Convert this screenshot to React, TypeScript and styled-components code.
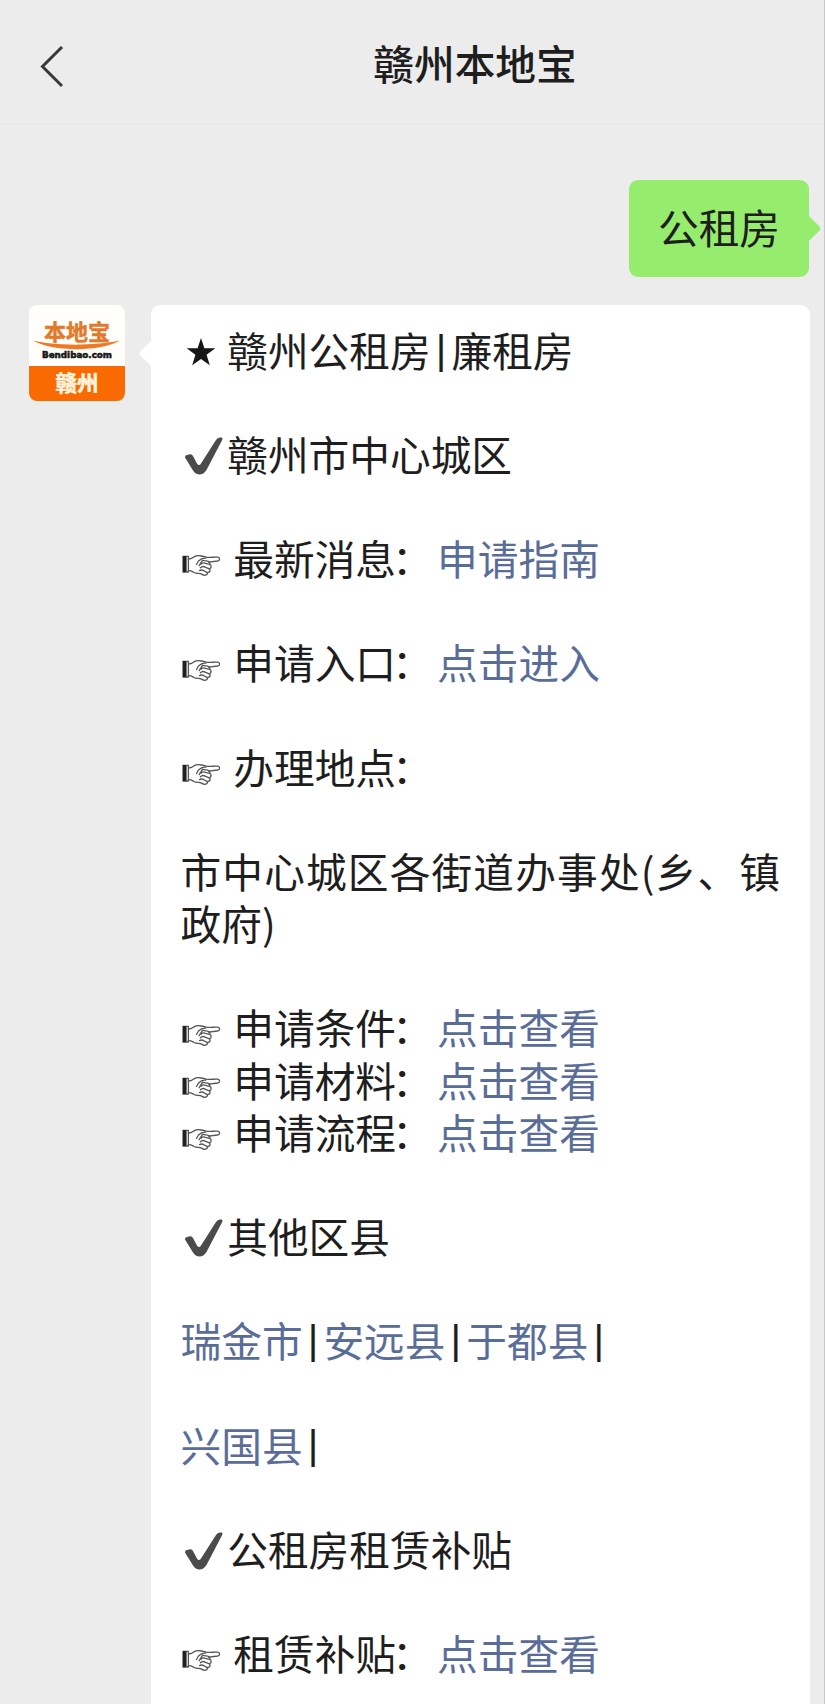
import React from "react";
import styled, { createGlobalStyle } from "styled-components";

const Global = createGlobalStyle`
  html, body { margin: 0; padding: 0; background: #ececec; }
  * { box-sizing: border-box; }
`;

const Screen = styled.div`
  width: 825px;
  height: 1704px;
  overflow: hidden;
  display: flex;
  flex-direction: column;
  background: #ececec;
  border-right: 1px solid #c6c7c9;
  font-family: "Noto Sans CJK SC", sans-serif;
  font-size: 40.7px;
  color: #1e1e1e;
`;

const Header = styled.header`
  flex: none;
  height: 125px;
  padding: 0 36px;
  display: grid;
  grid-template-columns: 40px 1fr 0;
  align-items: center;
  border-bottom: 2px solid #e9e9e9;
`;

const Title = styled.h1`
  margin: 2px 0 0 86px;
  text-align: center;
  font-size: 40.7px;
  line-height: 52px;
  font-weight: 500;
`;

const BackIcon = styled.svg`
  width: 30px;
  height: 46px;
  margin-top: 8px;
`;

const Chat = styled.main`
  flex: 1;
  display: flex;
  flex-direction: column;
  gap: 28px;
  padding: 55px 14px 0 29px;
`;

const Outgoing = styled.div`
  align-self: flex-end;
  position: relative;
  width: 180px;
  height: 97px;
  margin-right: 1px;
  padding-bottom: 4px;
  display: flex;
  align-items: center;
  justify-content: center;
  border-radius: 9px;
  background: #96ec6d;
  line-height: 52px;
`;

const Tail = styled.svg<{ $side: "left" | "right" }>`
  position: absolute;
  ${(p) => (p.$side === "right" ? "right: -12px" : "left: -12px")};
  top: 35px;
  width: 13px;
  height: 27px;
`;

const Incoming = styled.div`
  display: flex;
  gap: 26px;
  align-items: flex-start;
`;

const Avatar = styled.div`
  width: 96px;
  height: 96px;
  flex: none;
  border-radius: 8px;
  overflow: hidden;
  background: #fffefb;
`;

const Bubble = styled.article`
  position: relative;
  width: 660px;
  height: 1420px;
  padding: 18.6px 0 0 29.5px;
  border-radius: 9px;
  background: #fff;
`;

const Line = styled.p<{ $space?: number }>`
  margin: 0;
  height: 52.15px;
  display: flex;
  align-items: center;
  white-space: nowrap;
  line-height: 52.15px;
  letter-spacing: ${(p) => p.$space ?? 0}px;
`;

const Gap = styled.div`
  height: 52.15px;
`;

const Link = styled.a`
  color: #5a6d99;
`;

const Colon = styled.span`
  width: 45px;
  margin-left: -4px;
`;

const BarSlot = styled.span`
  width: 20.8px;
  text-align: center;
  font-family: "Liberation Sans", sans-serif;
`;

const Marker = styled.svg<{ $slot: number }>`
  width: ${(p) => p.$slot}px;
  height: 52px;
  flex: none;
  margin-top: 4px;
`;

const Bar = () => <BarSlot>|</BarSlot>;

const Star = () => (
  <Marker $slot={46.7} viewBox="0 0 46.7 52">
    <path
      d="M20 12 L23.4 22.2 L34.3 22.3 L25.6 28.8 L28.8 39.2 L20 33 L11.2 39.2 L14.4 28.8 L5.7 22.3 L16.6 22.2Z"
      fill="#161616"
    />
  </Marker>
);

const Check = () => (
  <Marker $slot={46.7} viewBox="0 0 46.7 52">
    <path
      d="M4 27.5Q3.8 25.5 6 25L9 24.2Q11.2 24 12 26L16 33.5Q18 36.5 20 33.5L35 10Q36.5 7.6 39 7.5H40.6Q42.2 7.8 41.2 10L25.5 40Q22.5 44.6 18.5 44.6Q14.5 44.4 12 40.5Z"
      fill="#4b4b4b"
    />
  </Marker>
);

const Hand = () => (
  <Marker $slot={52.8} viewBox="0 0 52.8 52" fill="none" stroke="#555" strokeWidth="1.3" strokeLinecap="round" strokeLinejoin="round">
    <path d="M1.5 21.8H5.6V38.6H1.5Z" fill="#202020" stroke="none" />
    <path d="M5.6 22.4H7.4V38H5.6" />
    <path d="M7.4 25C10 25.2 11.5 24.2 13.5 22.6C15.5 21.2 18 21.4 20.5 22L25.5 23.2C29.5 24 33 22.6 36.8 23.2C39.4 23.8 39 26.6 36.8 27L27.5 28.2" />
    <path d="M7.4 36.6C10 36.4 11 37.4 13 38.5C16 40 18.5 38.8 21 40.4C23.5 42 26.5 41.4 26.6 38.6C29.4 38.4 29.6 36 28.4 34.8C30.8 33.6 30.6 31.2 28.6 30.4C29.4 29 28.6 27.6 26.5 27.2L21.5 26.4" />
    <path d="M24.8 24.2C22.5 23.8 19.5 25 17.5 27L15.5 30.5M20.2 30.2C21.2 28.6 23 28.4 24.4 29.4L28.6 30.4M19.4 33.8C21.4 31.6 23 32.4 24.6 33.4L28.4 34.8M18.6 36.6C21 35 22.4 36.4 24 37.4L26.6 38.6M21.5 26.4L18.2 31.6" />
  </Marker>
);

const Logo = () => (
  <svg width="96" height="96" viewBox="0 0 96 96">
    <rect y="61" width="96" height="35" fill="#fa6a02" />
    <text x="48" y="34.5" textAnchor="middle" fontSize="22" fontWeight="700" fill="#e3792a" stroke="#e3792a" strokeWidth=".5" fontFamily="Noto Sans CJK SC" textLength="66">
      本地宝
    </text>
    <path d="M4 35.5C25 41 66 41 91 35.5C72 47 23 47 4 35.5Z" fill="#ee7a24" />
    <text x="48" y="52.5" textAnchor="middle" fontSize="9" fontWeight="700" fill="#181818" stroke="#181818" strokeWidth=".6" fontFamily="DejaVu Sans" textLength="70" lengthAdjust="spacingAndGlyphs">
      Bendibao.com
    </text>
    <text x="48" y="86" textAnchor="middle" fontSize="21.5" fontWeight="700" fill="#fff4df" stroke="#fff4df" strokeWidth=".6" fontFamily="Noto Sans CJK SC">
      赣州
    </text>
  </svg>
);

const Entry = ({ label, link }: { label: string; link?: string }) => (
  <Line>
    <Hand />
    {label}
    <Colon>：</Colon>
    {link && <Link>{link}</Link>}
  </Line>
);

export default function App() {
  return (
    <>
      <Global />
      <Screen lang="zh-CN">
        <Header>
          <BackIcon viewBox="0 0 30 46" fill="none" stroke="#3a3a3a" strokeWidth="3">
            <path d="M26 4L6.5 23.5L26 43" />
          </BackIcon>
          <Title>赣州本地宝</Title>
        </Header>
        <Chat>
          <Outgoing>
            公租房
            <Tail $side="right" viewBox="0 0 13 27">
              <path d="M0 0L11.5 11.5Q13 13.5 11.5 15.5L0 27Z" fill="#96ec6d" />
            </Tail>
          </Outgoing>
          <Incoming>
            <Avatar>
              <Logo />
            </Avatar>
            <Bubble>
              <Tail $side="left" viewBox="0 0 13 27">
                <path d="M13 0L1.5 11.5Q0 13.5 1.5 15.5L13 27Z" fill="#fff" />
              </Tail>
              <Line><Star />赣州公租房<Bar />廉租房</Line>
              <Gap />
              <Line><Check />赣州市中心城区</Line>
              <Gap />
              <Entry label="最新消息" link="申请指南" />
              <Gap />
              <Entry label="申请入口" link="点击进入" />
              <Gap />
              <Entry label="办理地点" />
              <Gap />
              <Line $space={1.15}>市中心城区各街道办事处(乡、镇</Line>
              <Line>政府)</Line>
              <Gap />
              <Entry label="申请条件" link="点击查看" />
              <Entry label="申请材料" link="点击查看" />
              <Entry label="申请流程" link="点击查看" />
              <Gap />
              <Line><Check />其他区县</Line>
              <Gap />
              <Line>
                <Link>瑞金市</Link><Bar /><Link>安远县</Link><Bar /><Link>于都县</Link><Bar />
              </Line>
              <Gap />
              <Line><Link>兴国县</Link><Bar /></Line>
              <Gap />
              <Line><Check />公租房租赁补贴</Line>
              <Gap />
              <Entry label="租赁补贴" link="点击查看" />
            </Bubble>
          </Incoming>
        </Chat>
      </Screen>
    </>
  );
}
